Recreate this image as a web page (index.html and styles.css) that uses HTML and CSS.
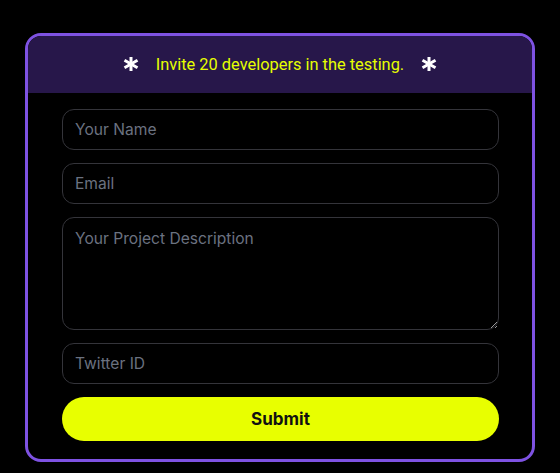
FILE: index.html
```html
<!DOCTYPE html>
<html lang="en">
<head>
<meta charset="utf-8">
<title>Invite developers</title>
<link rel="stylesheet" href="styles.css">
</head>
<body>
  <h1 class="hero"><span class="hero-white">Build with the best</span> <span class="hero-green">and win rewards</span></h1>
  <div class="card">
    <div class="card-head">
      <svg class="star" viewBox="0 0 16 16" aria-hidden="true"><g stroke="#fff" stroke-width="3" stroke-linecap="butt"><line x1="8" y1="1" x2="8" y2="15"/><line x1="1.5" y1="4.3" x2="14.5" y2="11.7"/><line x1="1.5" y1="11.7" x2="14.5" y2="4.3"/></g></svg>
      <span class="head-text">Invite 20 developers in the testing.</span>
      <svg class="star" viewBox="0 0 16 16" aria-hidden="true"><g stroke="#fff" stroke-width="3" stroke-linecap="butt"><line x1="8" y1="1" x2="8" y2="15"/><line x1="1.5" y1="4.3" x2="14.5" y2="11.7"/><line x1="1.5" y1="11.7" x2="14.5" y2="4.3"/></g></svg>
    </div>
    <form class="form">
      <input class="field" type="text" placeholder="Your Name">
      <input class="field" type="email" placeholder="Email">
      <textarea class="field area" placeholder="Your Project Description"></textarea>
      <input class="field" type="text" placeholder="Twitter ID">
      <button class="submit" type="button">Submit</button>
    </form>
  </div>
</body>
</html>
```

FILE: styles.css
```css
html, body {
  background: #000;
}
body {
  margin: 0;
  font-family: Inter, "Liberation Sans", sans-serif;
  color-scheme: dark;
}
.hero {
  margin: -38px 0 0 0;
  height: 40px;
  font-size: 40px;
  line-height: 48px;
  font-family: Inter, sans-serif;
  font-weight: 800;
  white-space: nowrap;
  text-align: center;
  overflow: hidden;
}
.hero-white { color: #8a8a8a; }
.hero-green { color: #6f7a00; }
.card {
  width: 510px;
  box-sizing: border-box;
  margin: 31px auto 0;
  border: 3px solid #7e52e2;
  border-radius: 16px;
  overflow: hidden;
  background: #000;
}
.card-head {
  height: 57px;
  background: #27174a;
  display: flex;
  align-items: center;
  justify-content: center;
  gap: 17px;
}
.star {
  width: 16px;
  height: 16px;
  margin-top: -2px;
}
.head-text {
  font-family: Roboto, sans-serif;
  font-size: 16.4px;
  color: #e6ff00;
}
.form {
  display: flex;
  flex-direction: column;
  gap: 13px;
  padding: 16px 33px 18px 34px;
}
.field {
  display: block;
  box-sizing: border-box;
  width: 100%;
  height: 41px;
  margin: 0;
  padding: 0 12px;
  background: #000;
  border: 1px solid #34343a;
  border-radius: 12px;
  font-family: Inter, sans-serif;
  font-size: 15.6px;
  color: #e5e7eb;
  outline: none;
}
.field::placeholder {
  color: #6b7280;
}
.area {
  height: 113px;
  padding: 11px 12px;
  resize: vertical;
}
.submit {
  display: block;
  height: 44px;
  margin: 0;
  border: none;
  border-radius: 22px;
  background: #e8ff00;
  color: #111;
  font-family: Inter, sans-serif;
  font-weight: 700;
  font-size: 17px;
  cursor: pointer;
}
```
